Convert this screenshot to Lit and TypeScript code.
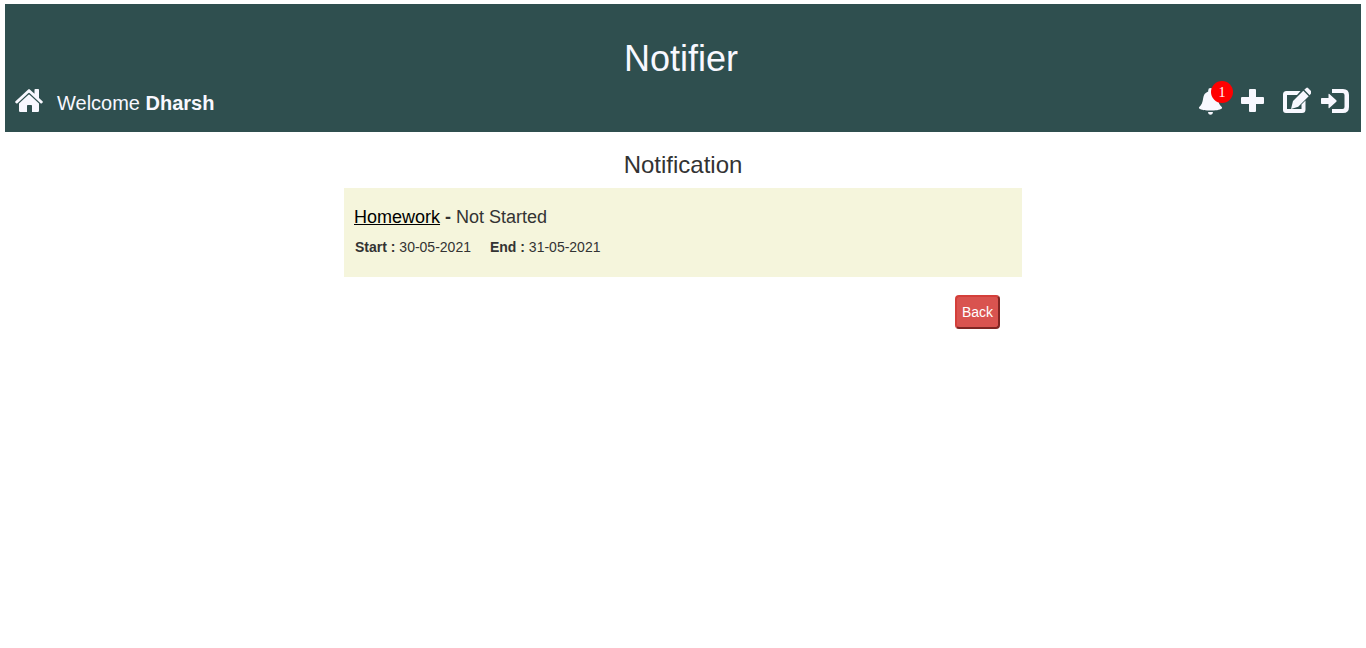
import { LitElement, html, css } from "lit";
import { customElement, property } from "lit/decorators.js";

interface Task {
  name: string;
  status: string;
  start: string;
  end: string;
}

@customElement("app-header")
class AppHeader extends LitElement {
  @property() user = "";
  @property({ type: Number }) count = 0;

  static styles = css`
    :host { display: block; }
    header {
      background: darkslategray;
      color: ghostwhite;
      padding: 35px 10px 9px;
    }
    h1 {
      margin: 0;
      padding-right: 4px;
      font-size: 36px;
      line-height: 40px;
      font-weight: 400;
      text-align: center;
    }
    .bar {
      display: flex;
      align-items: center;
      justify-content: space-between;
      height: 44px;
    }
    .group { display: flex; align-items: center; }
    .welcome { margin-left: 14px; font-size: 20px; line-height: 28px; padding-top: 4px; }
    a { display: block; position: relative; color: inherit; text-decoration: none; }
    svg { display: block; width: 28px; height: 28px; fill: currentColor; }
    .actions { gap: 14px; padding-right: 2px; }
    .add { margin-right: 3px; }
    .logout { margin-left: -4px; }
    .badge {
      position: absolute;
      top: -6px;
      left: 15px;
      width: 22px;
      height: 22px;
      border-radius: 50%;
      background: red;
      color: white;
      font: 14px/24px "Liberation Serif", serif;
      text-align: center;
    }
  `;

  render() {
    return html`
      <header>
        <h1>Notifier</h1>
        <div class="bar">
          <div class="group">
            <a href="#home" aria-label="Home">
              <svg viewBox="0 0 28 28">
                <path d="M13.2 2.400Q14 1.700 14.800 2.400L19.500 6.800V2.800Q19.500 2 20.300 2H23.200Q24 2 24 2.800V11L27.500 14.300Q28.200 15 27.500 15.700L26.900 16.200Q26.200 16.800 25.500 16.200L14.800 6.200Q14 5.500 13.200 6.200L2.500 16.200Q1.800 16.800 1.100 16.200L.5 15.700Q-.2 15 .5 14.300Z"/>
                <path d="M13.400 7.800Q14 7.200 14.600 7.800L24 16.600V23.800Q24 25 22.800 25H17V18.800Q17 18 16.200 18H12.800Q12 18 12 18.800V25H5.200Q4 25 4 23.800V16.600Z"/>
              </svg>
            </a>
            <div class="welcome">Welcome <b>${this.user}</b></div>
          </div>
          <nav class="group actions">
            <a href="#notifications" aria-label="Notifications">
              <svg viewBox="0 0 28 28">
                <path d="M12.200 3.400A2.300 2.300 0 0 1 16.800 3.400V4.500C20.200 5.800 21.300 8 21.800 11C22.400 15.500 23.500 18 25.500 19.700Q26.500 20.800 25.800 21.400C24 23 19 23.500 14.500 23.500S5 23 3.200 21.400Q2.500 20.800 3.500 19.700C5.500 18 6.600 15.500 7.200 11C7.700 8 8.800 5.800 12.200 4.500ZM12 24.900H17L16.400 27Q14.500 28.300 12.600 27Z"/>
              </svg>
              <span class="badge">${this.count}</span>
            </a>
            <a class="add" href="#add" aria-label="Add task">
              <svg viewBox="0 0 28 28">
                <path d="M12 2H17Q18 2 18 3V10H25Q26 10 26 11V16Q26 17 25 17H18V24Q18 25 17 25H12Q11 25 11 24V17H4Q3 17 3 16V11Q3 10 4 10H11V3Q11 2 12 2Z"/>
              </svg>
            </a>
            <a href="#edit" aria-label="Edit tasks">
              <svg viewBox="0 0 28 28">
                <path d="M3.500 4H17.500L14 8H4V22H18.500V17.500L22.500 13.500V22.500Q22.500 26 19 26H3Q0 26 0 23V7.500Q0 4 3.500 4Z"/>
                <path d="M20.300 3.800L25.700 9.200L15.200 19.700L8 22L10 14.100ZM21.300 2.800L23.200.9Q24.100 0 25 .9L28.300 4.200Q29.200 5.100 28.300 6L26.700 8.200Z"/>
              </svg>
            </a>
            <a class="logout" href="#logout" aria-label="Log out">
              <svg viewBox="0 0 28 28">
                <path d="M11 2H22Q28 2 28 8V20Q28 26 22 26H11V22H21.500Q23.500 22 23.500 20V8Q23.500 6 21.500 6H11Z"/>
                <path d="M7.500 7.500Q7.500 6.300 8.400 7.100L15.300 13.300Q16.100 14 15.300 14.700L8.400 20.900Q7.500 21.700 7.500 20.500V17H.8Q0 17 0 16.200V11.800Q0 11 .8 11H7.500Z"/>
              </svg>
            </a>
          </nav>
        </div>
      </header>
    `;
  }
}

@customElement("app-root")
class AppRoot extends LitElement {
  private tasks: Task[] = [
    { name: "Homework", status: "Not Started", start: "30-05-2021", end: "31-05-2021" },
  ];

  static styles = css`
    :host {
      display: block;
      padding: 4px 5px;
      color: #333;
      font: 14px/20px "Liberation Sans", Arial, sans-serif;
    }
    main { width: 50%; margin: 0 auto; padding-top: 20px; }
    h2 { margin: 0 0 10px; font-size: 24px; line-height: 26px; font-weight: 400; text-align: center; }
    .card { background: beige; padding: 19px 10px 20px; }
    h3 { margin: 0 0 9px; font-size: 18px; line-height: 21px; font-weight: 400; }
    h3 a { color: black; text-decoration: underline; }
    .dates { display: flex; gap: 19px; margin: 0 1px; }
    .actions { display: flex; justify-content: flex-end; padding: 18px 22px; }
    button {
      padding: 5px;
      border: 2px outset #d43f3a;
      border-radius: 4px;
      background: #d9534f;
      color: white;
      font: inherit;
      cursor: pointer;
    }
  `;

  render() {
    return html`
      <app-header user="Dharsh" .count=${this.tasks.length}></app-header>
      <main>
        <h2>Notification</h2>
        ${this.tasks.map(
          (t) => html`
            <section class="card">
              <h3><a href="#task">${t.name}</a> <b>-</b> ${t.status}</h3>
              <div class="dates">
                <span><b>Start :</b> ${t.start}</span>
                <span><b>End :</b> ${t.end}</span>
              </div>
            </section>
          `
        )}
        <div class="actions"><button type="button">Back</button></div>
      </main>
    `;
  }
}
